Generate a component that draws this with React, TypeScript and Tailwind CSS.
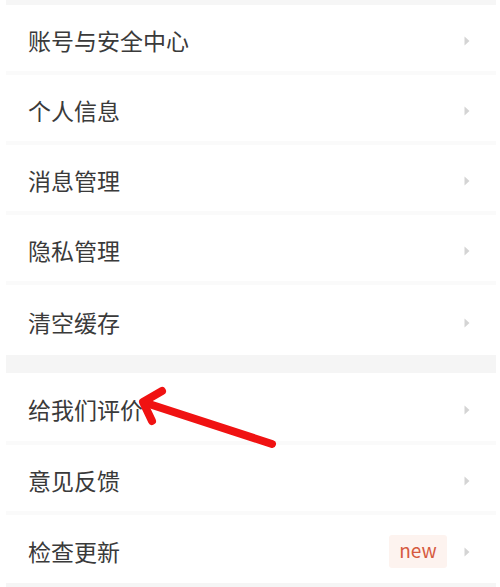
import React from "react";

type Item = { label: string; badge?: string };

const groupA: Item[] = [
  { label: "账号与安全中心" },
  { label: "个人信息" },
  { label: "消息管理" },
  { label: "隐私管理" },
  { label: "清空缓存" },
];

const groupB: Item[] = [
  { label: "给我们评价" },
  { label: "意见反馈" },
  { label: "检查更新", badge: "new" },
];

const Chevron = () => (
  <svg width="6" height="10" viewBox="0 0 6 10" className="shrink-0">
    <path d="M0.5 0.5 L5.5 5 L0.5 9.5 Z" fill="#d4d4d4" />
  </svg>
);

const Row = ({ item, height }: { item: Item; height: string }) => (
  <div className={`flex items-center justify-between pl-[22px] pr-[26px] pt-[5px] ${height}`}>
    <span className="text-[23px] text-[#3a3a3a] leading-none">{item.label}</span>
    <div className="flex items-center gap-[17px]">
      {item.badge && (
        <span className="flex h-[33px] w-[58px] items-center justify-center rounded-[3px] bg-[#fdf3ef] text-[19px] text-[#d65a40] pb-[2px]">
          {item.badge}
        </span>
      )}
      <Chevron />
    </div>
  </div>
);

const Line = () => <div className="h-[4px] bg-[#fafafa]" />;

export default function App() {
  return (
    <div
      className="relative h-[587px] w-[500px] overflow-hidden bg-white"
      style={{ fontFamily: '"Noto Sans CJK SC", "Noto Sans", sans-serif' }}
    >
      <div className="pl-[6px] pr-[4px]">
        <div className="h-[5px] bg-[#f6f6f6]" />
        <Row item={groupA[0]} height="h-[66px]" />
        <Line />
        <Row item={groupA[1]} height="h-[66px]" />
        <Line />
        <Row item={groupA[2]} height="h-[66px]" />
        <Line />
        <Row item={groupA[3]} height="h-[66px]" />
        <Line />
        <Row item={groupA[4]} height="h-[70px]" />
        <div className="h-[18px] bg-[#f5f5f5]" />
        <Row item={groupB[0]} height="h-[68px]" />
        <Line />
        <Row item={groupB[1]} height="h-[66px]" />
        <Line />
        <Row item={groupB[2]} height="h-[68px]" />
        <div className="h-[4px] bg-[#f5f5f5]" />
      </div>

      <svg
        className="pointer-events-none absolute left-0 top-0"
        width="500"
        height="587"
        viewBox="0 0 500 587"
      >
        <g stroke="#f01212" strokeWidth="8" strokeLinecap="round" strokeLinejoin="round" fill="none">
          <line x1="272" y1="444" x2="146" y2="403" />
          <polyline points="162,391 143,402 152,421" />
        </g>
      </svg>
    </div>
  );
}
